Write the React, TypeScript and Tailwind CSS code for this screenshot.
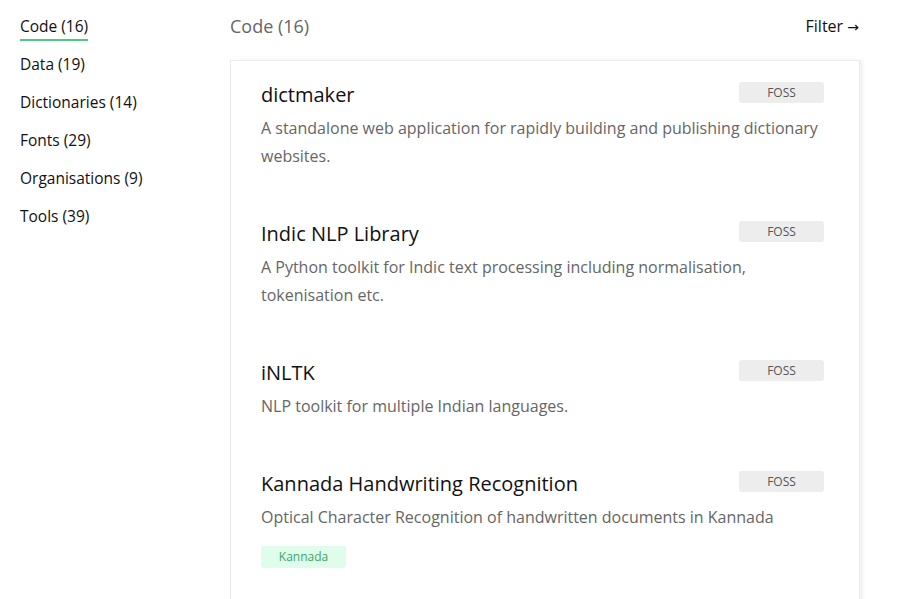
import React from "react";

const cats = [
  "Code (16)",
  "Data (19)",
  "Dictionaries (14)",
  "Fonts (29)",
  "Organisations (9)",
  "Tools (39)",
];

const items: { title: string; desc: string; tags?: string[] }[] = [
  {
    title: "dictmaker",
    desc: "A standalone web application for rapidly building and publishing dictionary websites.",
  },
  {
    title: "Indic NLP Library",
    desc: "A Python toolkit for Indic text processing including normalisation, tokenisation etc.",
  },
  { title: "iNLTK", desc: "NLP toolkit for multiple Indian languages." },
  {
    title: "Kannada Handwriting Recognition",
    desc: "Optical Character Recognition of handwritten documents in Kannada",
    tags: ["Kannada"],
  },
];

export default function App() {
  return (
    <div
      className="flex h-[599px] w-[903px] overflow-hidden bg-white text-[#111]"
      style={{ fontFamily: '"Open Sans", "Noto Sans", sans-serif' }}
    >
      <aside className="w-[230px] shrink-0 pl-[20px] pt-[14px]">
        <ul className="flex flex-col">
          {cats.map((c, i) => (
            <li key={c} className="h-[38px] text-[15.5px] leading-[25px]">
              <span
                className={
                  i === 0
                    ? "inline-block border-b-2 border-[#4cc985]"
                    : "inline-block"
                }
              >
                {c}
              </span>
            </li>
          ))}
        </ul>
      </aside>
      <main className="w-[630px] shrink-0">
        <div className="flex h-[60px] items-start justify-between pt-[12px]">
          <h2 className="text-[18px] leading-[28px] text-[#666]">Code (16)</h2>
          <span className="pr-[1px] text-[16px] leading-[28px] text-[#111]">
            Filter{" "}
            <span style={{ fontFamily: '"DejaVu Sans", sans-serif' }} className="text-[14px]">
              →
            </span>
          </span>
        </div>
        <div className="min-h-[580px] border border-[#ececec] shadow-[3px_0_3px_rgba(0,0,0,0.06)]">
          {items.map((it) => (
            <div key={it.title} className="flex flex-col pl-[30px] pr-[35px] pt-[20px] pb-[30px]">
              <div className="flex h-[28px] items-start justify-between">
                <h3 className="h-[28px] text-[20px] leading-[28px] text-[#111]">{it.title}</h3>
                <span className="mt-[1px] flex h-[21px] w-[85px] shrink-0 items-center justify-center rounded-[3px] bg-[#ededed] text-[12px] text-[#555]">
                  FOSS
                </span>
              </div>
              <p className="mt-[5px] text-[16px] leading-[28px] text-[#666]">{it.desc}</p>
              {it.tags && (
                <div className="mt-[15px] flex gap-2">
                  {it.tags.map((t) => (
                    <span
                      key={t}
                      className="flex h-[22px] w-[85px] items-center justify-center rounded-[3px] bg-[#e0fcea] text-[12px] text-[#3aa86a]"
                    >
                      {t}
                    </span>
                  ))}
                </div>
              )}
            </div>
          ))}
        </div>
      </main>
    </div>
  );
}
